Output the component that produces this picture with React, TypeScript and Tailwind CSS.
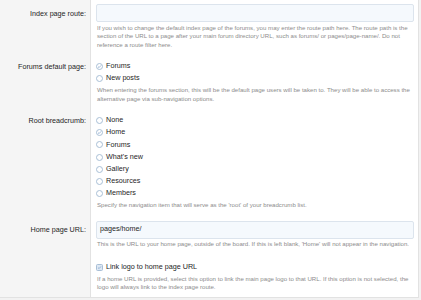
const hint = "text-[6.1px] leading-[8.5px] text-[#8c8c8c]";

function Radio({ checked, label }: { checked?: boolean; label: string }) {
  return (
    <div className="flex items-center h-[12.1px] gap-[3px]">
      <span className="w-[7px] h-[7px] rounded-full border border-[#a9bfd6] bg-white flex items-center justify-center">
        {checked && (
          <svg viewBox="0 0 10 10" className="w-[5px] h-[5px]">
            <path d="M2 5.2 L4.2 7.2 L8 2.8" fill="none" stroke="#7d9fc9" strokeWidth="1.4" />
          </svg>
        )}
      </span>
      <span className="text-[7.2px] text-[#1e1e1e]">{label}</span>
    </div>
  );
}

function Row({ label, children, top = "pt-[6px]", labelTop = "pt-[3px]" }: { label: string; children: React.ReactNode; top?: string; labelTop?: string }) {
  return (
    <div className="flex">
      <div className={`w-[91px] shrink-0 bg-[#f5f5f5] border-r border-[#e2e2e2] text-right pr-[4px] ${top}`}>
        <div className={`text-[7.2px] text-[#1e1e1e] ${labelTop}`}>{label}</div>
      </div>
      <div className={`flex-1 bg-white pl-[5px] pr-[4px] pb-[5.5px] ${top}`}>{children}</div>
    </div>
  );
}

export default function App() {
  return (
    <div className="w-[421px] h-[300px] overflow-hidden bg-[#f2f2f2] font-['Liberation_Sans',Arial,sans-serif]">
      <div className="w-[419px] border-r border-b border-[#e2e2e2]">
        <Row label="Index page route:" top="pt-[4px]" labelTop="pt-[4.5px]">
          <div className="h-[18px] rounded-[2px] border border-[#dce4ed] bg-[#f5f9fd]" />
          <div className={`${hint} mt-[1.5px] pl-[1px] pr-[4px]`}>
            If you wish to change the default index page of the forums, you may enter the route path here. The route path is the section of the URL to a page after your main forum directory URL, such as forums/ or pages/page-name/. Do not reference a route filter here.
          </div>
        </Row>
        <Row label="Forums default page:" labelTop="pt-[1.5px]">
          <Radio checked label="Forums" />
          <Radio label="New posts" />
          <div className={`${hint} mt-[1.5px] pl-[1px] pr-[4px]`}>
            When entering the forums section, this will be the default page users will be taken to. They will be able to access the alternative page via sub-navigation options.
          </div>
        </Row>
        <Row label="Root breadcrumb:" labelTop="pt-[1.5px]">
          <Radio label="None" />
          <Radio checked label="Home" />
          <Radio label="Forums" />
          <Radio label="What's new" />
          <Radio label="Gallery" />
          <Radio label="Resources" />
          <Radio label="Members" />
          <div className={`${hint} mt-[1.5px] pl-[1px] pr-[4px]`}>
            Specify the navigation item that will serve as the 'root' of your breadcrumb list.
          </div>
        </Row>
        <Row label="Home page URL:" labelTop="pt-[4.5px]">
          <div className="h-[18px] rounded-[2px] border border-[#dce4ed] bg-[#f5f9fd] flex items-center pl-[3px] text-[7.2px] text-[#1e1e1e]">
            pages/home/
          </div>
          <div className={`${hint} mt-[1.5px] pl-[1px] pr-[4px]`}>
            This is the URL to your home page, outside of the board. If this is left blank, 'Home' will not appear in the navigation.
          </div>
        </Row>
        <Row label="" top="pt-[7px]">
          <div className="flex items-center h-[12px] gap-[3px]">
            <span className="w-[7px] h-[7px] rounded-[1.5px] border border-[#a9bfd6] bg-[#dde8f4] flex items-center justify-center">
              <svg viewBox="0 0 10 10" className="w-[5px] h-[5px]">
                <path d="M2 5.2 L4.2 7.2 L8 2.8" fill="none" stroke="#7d9fc9" strokeWidth="1.4" />
              </svg>
            </span>
            <span className="text-[7.2px] text-[#1e1e1e]">Link logo to home page URL</span>
          </div>
          <div className={`${hint} mt-[1.5px] pl-[1px] pr-[4px]`}>
            If a home URL is provided, select this option to link the main page logo to that URL. If this option is not selected, the logo will always link to the index page route.
          </div>
        </Row>
      </div>
    </div>
  );
}
